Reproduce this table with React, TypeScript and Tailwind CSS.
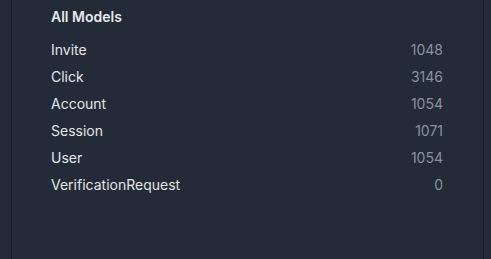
const models = [
  { name: 'Invite', count: 1048 },
  { name: 'Click', count: 3146 },
  { name: 'Account', count: 1054 },
  { name: 'Session', count: 1071 },
  { name: 'User', count: 1054 },
  { name: 'VerificationRequest', count: 0 },
];

export default function App() {
  return (
    <div className="h-[259px] w-[491px] overflow-hidden bg-[#222b37] font-['Inter',sans-serif]">
      <div className="ml-[11px] h-full w-[473px] border-x border-[#19202a] pl-[39px] pr-[40px] pt-[7px]">
        <h2 className="text-[14px] font-semibold leading-5 text-[#e8eaee]">All Models</h2>
        <ul className="mt-[9px] flex flex-col">
          {models.map((m) => (
            <li key={m.name} className="flex h-[27px] items-center justify-between text-[14px]">
              <span className="text-[#e3e6ea]">{m.name}</span>
              <span className="text-[#8a929e]">{m.count}</span>
            </li>
          ))}
        </ul>
      </div>
    </div>
  );
}
